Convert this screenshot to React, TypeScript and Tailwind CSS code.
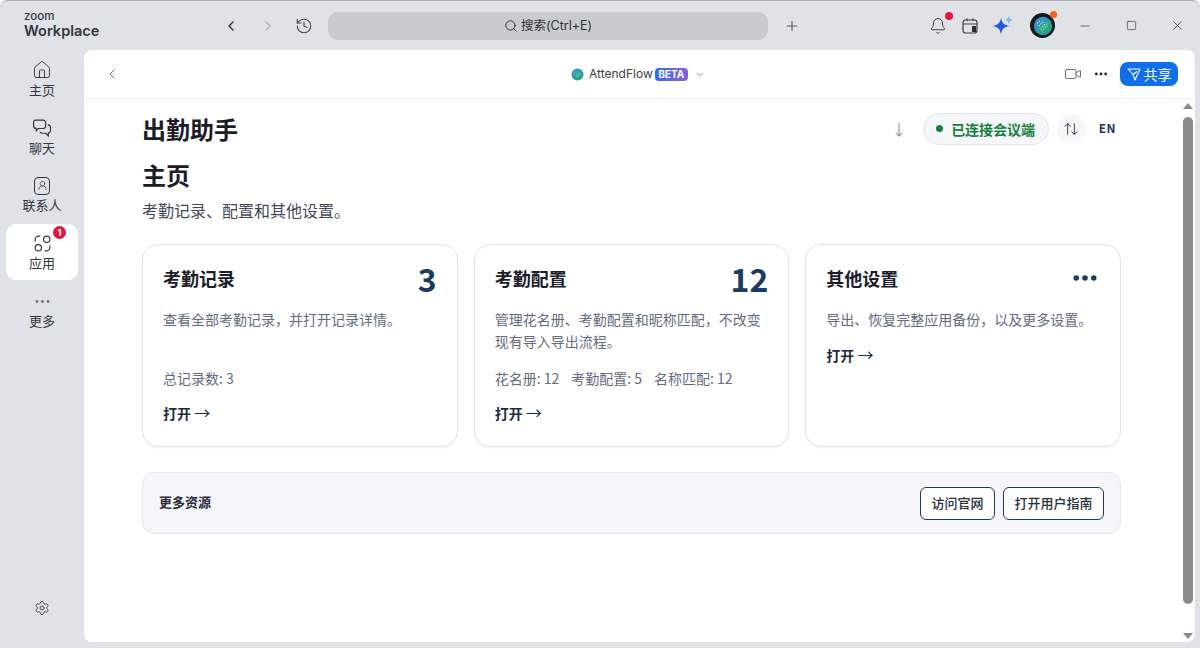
import { ChevronLeft, ChevronRight, ChevronDown, History, Search, Plus, Bell, Minus, Square, X, Video, Ellipsis, ArrowUpDown, Settings, House, UserRound } from "lucide-react"

const FONT = "font-['Inter','Noto_Sans_CJK_SC',sans-serif]"
const CONTENT_FONT = "font-['Noto_Sans_CJK_SC',sans-serif]"

function Globe({ size }: { size: number }) {
  return (
    <svg width={size} height={size} viewBox="0 0 24 24">
      <defs>
        <linearGradient id="globeFill" x1="0" y1="0" x2="1" y2="1">
          <stop offset="0" stopColor="#3f8fd8" />
          <stop offset="1" stopColor="#1fa37a" />
        </linearGradient>
      </defs>
      <circle cx="12" cy="12" r="11" fill="url(#globeFill)" />
      <path d="M5 9l3-3M7 12l6-6M9 15l7-7M12 17l6-6" stroke="#bfe6f2" strokeWidth="1.4" strokeDasharray="1.5 1.5" />
      <path d="M8 14l3 3 7-8" stroke="#47c84f" strokeWidth="2.4" fill="none" />
    </svg>
  )
}

function SideItem({ label, icon, active, badge }: { label: string; icon: React.ReactNode; active?: boolean; badge?: boolean }) {
  return (
    <div className={`relative flex h-[56px] w-[72px] flex-col items-center justify-center rounded-[10px] pt-[2px] ${active ? "bg-white" : ""}`}>
      {icon}
      <span className="mt-[1px] text-[13px] leading-[18px] text-[#33363d]">{label}</span>
      {badge && (
        <span className="absolute right-[12px] top-[2px] flex h-[13px] w-[13px] items-center justify-center rounded-full bg-[#e3163f] text-[9px] font-bold leading-none text-white">1</span>
      )}
    </div>
  )
}

function Card({ title, value, desc, stats }: { title: string; value: React.ReactNode; desc: string; stats?: string[] }) {
  return (
    <div className="flex h-[203px] flex-col rounded-[16px] border border-[#e2e4ea] bg-white px-[20px] pt-[14px] shadow-[0_1px_2px_rgba(20,30,50,0.05)]">
      <div className="flex h-[38px] items-center justify-between">
        <span className="text-[18px] font-bold text-[#1c1c2b]">{title}</span>
        {value}
      </div>
      <p className="mt-[11px] h-[44px] text-[14px] leading-[22px] text-[#646b80]">{desc}</p>
      {stats && (
        <div className="mt-[15px] flex h-[22px] gap-[12px] text-[14px] leading-[22px] text-[#646b80]">
          {stats.map(s => <span key={s}>{s}</span>)}
        </div>
      )}
      <span className={`${stats ? "mt-[13px]" : "mt-[-8px]"} text-[14px] font-bold leading-[22px] text-[#1c2c42]`}>
        打开 <span className="text-[16px] font-normal leading-none">→</span>
      </span>
    </div>
  )
}

function CardNumber({ n }: { n: string }) {
  return <span className="text-[32px] font-bold leading-none text-[#1c3b5e]">{n}</span>
}

export default function App() {
  return (
    <div className={`${FONT} flex h-[648px] w-[1200px] flex-col overflow-hidden rounded-t-[8px] border-t border-[#a8abaf] bg-[#dfe2e7]`}>
      <div className="flex h-[49px] items-center">
        <div className="ml-[24px] flex w-[190px] flex-col text-[#33363b]">
          <span className="text-[11.5px] font-medium leading-[10px]">zoom</span>
          <span className="text-[14.5px] font-semibold leading-[19px]">Workplace</span>
        </div>
        <ChevronLeft className="ml-[9px] text-[#2b2e33]" size={16} strokeWidth={2} />
        <ChevronRight className="ml-[21px] text-[#b0b3b8]" size={16} strokeWidth={2} />
        <History className="ml-[19px] text-[#44474c]" size={18} strokeWidth={1.5} />
        <div className="ml-[15px] flex h-[28px] w-[440px] items-center justify-center gap-[3px] rounded-[10px] bg-[#c8cbcf] text-[12.5px] text-[#2d3036]">
          <Search size={14} strokeWidth={1.6} />
          <span className="mt-[1px]">搜索(Ctrl+E)</span>
        </div>
        <Plus className="ml-[16px] text-[#55585d]" size={16} strokeWidth={1.5} />
        <div className="relative ml-[129px]">
          <Bell className="text-[#3b3e43]" size={18} strokeWidth={1.3} />
          <span className="absolute right-[-6px] top-[-5px] h-[8px] w-[8px] rounded-full bg-[#e3163f]" />
        </div>
        <svg className="ml-[14px]" width="18" height="18" viewBox="0 0 18 18" fill="none">
          <rect x="2" y="3" width="14" height="13" rx="2.5" stroke="#3b3e43" strokeWidth="1.2" />
          <path d="M2 7h14M6 1.500V4M12 1.500V4" stroke="#3b3e43" strokeWidth="1.2" />
          <rect x="11" y="9" width="4" height="6" fill="#2a2d31" />
        </svg>
        <svg className="ml-[13px]" width="22" height="22" viewBox="0 0 22 22">
          <path d="M9 2.500c.8 5.500 3 7.700 9 8.500-6 .8-8.200 3-9 8.500-.8-5.500-3-7.700-9-8.500 6-.8 8.200-3 9-8.500z" fill="#2557e0" />
          <path d="M17 1l1.200 2.800L21 5l-2.800 1.200L17 9l-1.200-2.800L13 5l2.800-1.200z" fill="#8db4ef" />
        </svg>
        <div className="relative ml-[16px] flex h-[25px] w-[25px] items-center justify-center rounded-full bg-[#15181c]">
          <Globe size={20} />
          <span className="absolute right-[-2px] top-[-2px] h-[7px] w-[7px] rounded-full bg-[#f0641e]" />
        </div>
        <Minus className="ml-[23px] text-[#55585d]" size={14} strokeWidth={1.5} />
        <Square className="ml-[34px] text-[#2d3036]" size={11} strokeWidth={1.4} />
        <X className="ml-[33px] text-[#2d3036]" size={15} strokeWidth={1.2} />
      </div>

      <div className="flex flex-1 pb-[6px] pr-[5px]">
        <div className="flex w-[84px] flex-col items-center gap-[2px]">
          <SideItem label="主页" icon={<House size={20} strokeWidth={1.1} className="text-[#33363d]" />} />
          <SideItem label="聊天" icon={
            <svg width="20" height="20" viewBox="0 0 19 19" fill="none" stroke="#33363d" strokeWidth="1.1">
              <path d="M3.500 2h7a2.500 2.500 0 0 1 2.500 2.500v3a2.500 2.500 0 0 1-2.500 2.500H6l-2 2v-2.100A2.500 2.500 0 0 1 1.500 7.500v-3A2 2 0 0 1 3.500 2z" />
              <path d="M15 6.500a2.500 2.500 0 0 1 2.500 2.500v3a2.500 2.500 0 0 1-2 2.400V17l-2.500-2.500H9.500A2.500 2.500 0 0 1 7.500 13" />
            </svg>
          } />
          <SideItem label="联系人" icon={
            <span className="flex h-[18px] w-[16px] items-center justify-center rounded-[4px] border border-[#33363d]">
              <UserRound size={11} strokeWidth={1.4} className="text-[#33363d]" />
            </span>
          } />
          <SideItem label="应用" active badge icon={
            <svg width="19" height="19" viewBox="0 0 18 18" fill="none" stroke="#33363d" strokeWidth="1.1">
              <path d="M2 7V5.500A3.500 3.500 0 0 1 5.500 2H7" />
              <circle cx="13" cy="5" r="3" />
              <circle cx="5" cy="13" r="3" />
              <path d="M16 11v1.500a3.500 3.500 0 0 1-3.500 3.500H11" />
            </svg>
          } />
          <SideItem label="更多" icon={<Ellipsis size={19} strokeWidth={1.5} className="text-[#6b6e73]" />} />
          <Settings className="mb-[26px] mt-auto text-[#3f4247]" size={16} strokeWidth={1.3} />
        </div>

        <div className="flex flex-1 flex-col overflow-hidden rounded-[8px] bg-white">
          <div className="flex h-[49px] items-center border-b border-[#eeeff2] pl-[20px] pr-[17px]">
            <ChevronLeft className="text-[#5d6066]" size={16} strokeWidth={1.3} />
            <div className="ml-[451px] flex items-center">
              <Globe size={13} />
              <span className="ml-[5px] text-[12px] text-[#3d4046]">AttendFlow</span>
              <span className="ml-[2px] rounded-[4px] bg-gradient-to-r from-[#1c6fe8] to-[#8a5fe0] px-[3.500px] text-[10px] font-bold leading-[13px] text-white">BETA</span>
              <ChevronDown className="ml-[6px] text-[#6b6e73]" size={11} strokeWidth={1.6} />
            </div>
            <Video className="ml-auto text-[#55585d]" size={18} strokeWidth={1.1} />
            <Ellipsis className="ml-[11px] text-[#22252a]" size={16} strokeWidth={2.2} />
            <div className="ml-[11px] flex h-[24px] w-[58px] items-center justify-center gap-[3px] rounded-[8px] bg-[#0f6fe8] text-[14px] text-white">
              <svg width="14" height="14" viewBox="0 0 14 14" fill="none" stroke="white" strokeWidth="1.1" strokeLinejoin="round">
                <path d="M1 2h12L8 13 6 7.500z" />
                <path d="M6 7.500L10 4.500" />
              </svg>
              <span>共享</span>
            </div>
          </div>

          <div className="flex flex-1">
            <div className={`${CONTENT_FONT} flex-1 pl-[58px] pr-[60px]`}>
              <div className="flex h-[61px] items-center">
                <span className="mt-[-2px] text-[24px] font-bold text-[#1c1c2b]">出勤助手</span>
                <span className="ml-auto text-[15px] font-light text-[#6a6d75]">↓</span>
                <div className="mb-[2px] ml-[16px] flex h-[32px] w-[126px] items-center justify-center gap-[8px] rounded-full border border-[#e4e6eb] bg-[#f5f6f9]">
                  <span className="h-[7px] w-[7px] rounded-full bg-[#17803f]" />
                  <span className="text-[14px] font-bold leading-none text-[#17803f]">已连接会议端</span>
                </div>
                <div className="mb-[2px] ml-[8px] flex h-[29px] w-[29px] items-center justify-center rounded-full bg-[#f5f6f9]">
                  <ArrowUpDown className="text-[#3b4152]" size={16} strokeWidth={1.5} />
                </div>
                <span className="mb-[4px] ml-[13px] mr-[5px] text-[12px] font-bold tracking-[0.5px] text-[#24395a]">EN</span>
              </div>
              <h2 className="mt-[-1px] text-[24px] font-bold leading-[32px] text-[#1c1c2b]">主页</h2>
              <p className="mt-[9px] text-[16px] leading-[20px] text-[#43465a]">考勤记录、配置和其他设置。</p>
              <div className="mt-[24px] grid grid-cols-3 gap-[16px]">
                <Card title="考勤记录" value={<CardNumber n="3" />} desc="查看全部考勤记录，并打开记录详情。" stats={["总记录数: 3"]} />
                <Card title="考勤配置" value={<CardNumber n="12" />} desc="管理花名册、考勤配置和昵称匹配，不改变现有导入导出流程。" stats={["花名册: 12", "考勤配置: 5", "名称匹配: 12"]} />
                <Card title="其他设置" value={<Ellipsis size={30} strokeWidth={2.4} className="text-[#1c3b5e]" />} desc="导出、恢复完整应用备份，以及更多设置。" />
              </div>
              <div className="mt-[25px] flex h-[62px] items-center justify-between rounded-[12px] border border-[#e4e6eb] bg-[#f5f6fa] pl-[16px] pr-[16px]">
                <span className="mb-[2px] text-[13px] font-bold text-[#2a2c3c]">更多资源</span>
                <div className="flex gap-[8px]">
                  <button className="h-[33px] w-[75px] rounded-[6px] border border-[#1c3b5e] bg-white text-[13px] font-medium text-[#26303f]">访问官网</button>
                  <button className="h-[33px] w-[101px] rounded-[6px] border border-[#1c3b5e] bg-white text-[13px] font-medium text-[#26303f]">打开用户指南</button>
                </div>
              </div>
            </div>
            <div className="flex w-[14px] flex-col items-center pb-[3px] pt-[4px]">
              <span className="h-0 w-0 border-x-[5px] border-b-[6px] border-x-transparent border-b-[#8a8c8a]" />
              <span className="mt-[8px] h-[487px] w-[10px] rounded-full bg-[#8a8c8a]" />
              <span className="mt-auto h-0 w-0 border-x-[5px] border-t-[6px] border-x-transparent border-t-[#8a8c8a]" />
            </div>
          </div>
        </div>
      </div>
    </div>
  )
}
